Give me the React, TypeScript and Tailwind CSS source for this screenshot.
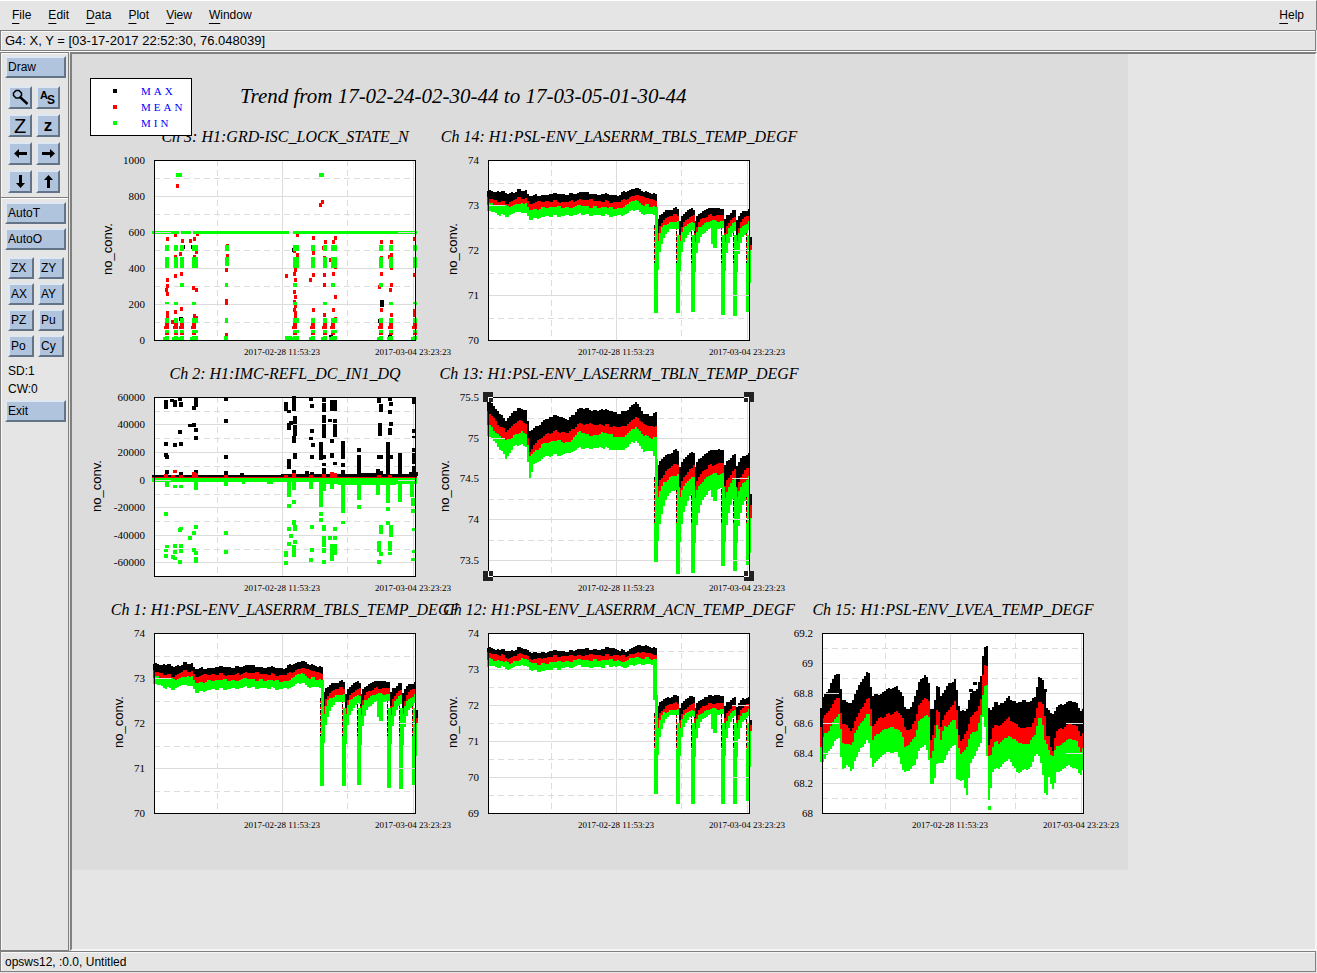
import React from 'react';

type Colour = 'max' | 'mean' | 'min';
type Mark = [x: number, y: number, w: number, h: number];
type Marks = Record<Colour, Mark[]>;
// x, top of max, top of mean, top of min, bottom of min
type Sample = [number, number, number, number, number];

interface PlotProps {
  title: string;
  className?: string;
  height?: number;
  ticks: [label: string, y: number][];
  labelX: number;
  marks: Marks;
  selected?: boolean;
}

const PLOT_WIDTH = 261;
const FILL: Record<Colour, string> = { max: '#000000', mean: '#ff0000', min: '#00ff00' };
const COLOURS: Colour[] = ['max', 'mean', 'min'];
const NOISE = [0, 1, 0, -1, 0, 0, 1, -1, 1, 0, 0, -1, 1];

const noise = (i: number) => NOISE[Math.abs(i) % NOISE.length];

const toPath = (marks: Mark[]) => marks.map(([x, y, w, h]) => `M${x} ${y}h${w}v${h}h${-w}z`).join('');

const band = (samples: Sample[], rough = 1): Marks => {
  const out: Marks = { max: [], mean: [], min: [] };
  const last = samples[samples.length - 1][0];
  let seg = 0;
  for (let x = samples[0][0]; x < last; x += 2) {
    while (samples[seg + 1][0] < x) seg++;
    const a = samples[seg];
    const b = samples[seg + 1];
    const t = (x - a[0]) / (b[0] - a[0]);
    const at = (k: number) => Math.round(a[k] + (b[k] - a[k]) * t);
    const i = Math.floor(x / 4);
    const top = at(1) + noise(i) * rough;
    const mean = at(2) + noise(i + 4);
    const min = at(3) + noise(i + 7);
    const bottom = at(4) + noise(i * 3 + 2) * rough;
    const left = Math.floor(x);
    out.max.push([left, top, 2, Math.max(mean - top, 1)]);
    out.mean.push([left, mean, 2, Math.max(min - mean, 1)]);
    out.min.push([left, min, 2, Math.max(bottom - min, 1)]);
  }
  return out;
};

const join = (...sets: Marks[]): Marks => ({
  max: sets.flatMap((s) => s.max),
  mean: sets.flatMap((s) => s.mean),
  min: sets.flatMap((s) => s.min),
});

const DROPS = [168, 190, 205, 235, 247, 260];

// Sudden drops in temperature, each followed by a slow recovery to the steady level
const recoveries = (
  steady: number[],
  rise: number[],
  tau: number[],
  bottoms: number[],
  dip: number,
  edge: number[],
): Marks => {
  const parts: Marks[] = [];
  DROPS.forEach((x, i) => {
    const end = DROPS[i + 1];
    if (end) {
      const samples: Sample[] = [];
      for (let s = x + 1; s <= end + 1; s++) {
        const y = steady.map((v, k) => v + rise[k] * Math.exp(-(s - x) / tau[k]));
        samples.push([s, y[0], y[1], y[2], y[3]]);
      }
      parts.push(band(samples));
    }
    const dashes: Marks = { max: [], mean: [], min: [] };
    const low = steady[3] + (bottoms[i] - steady[3]) * 0.65;
    for (let y = steady[2] + 4; y < low; y += 6) {
      dashes.max.push([x - 2, y, 1, 3]);
      dashes.mean.push([x - 2, y + 3, 1, 2]);
    }
    const start = i === 0 ? steady[2] - 14 : steady[2] + 14;
    dashes.min.push([x - 1, start, 3, bottoms[i] - start], [x - 2, steady[3] + 34, 4, bottoms[i] - steady[3] - 34]);
    parts.push(dashes);
  });
  parts.push({
    max: [[261, edge[0], 3, edge[1] - edge[0]]],
    mean: [[261, edge[1], 3, edge[2] - edge[1]]],
    min: [[223, steady[2] + 2, 6, dip - steady[2] - 6], [225, steady[2], 4, dip - steady[2]], [261, edge[2], 2, edge[3] - edge[2]]],
  });
  return join(...parts);
};

const TBLS = join(
  band([
    [-1, 30, 38, 44, 50], [15, 32, 42, 45, 56], [18, 34, 43, 47, 56], [30, 30, 38, 43, 52], [37, 30, 38, 44, 54],
    [40, 36, 43, 50, 59], [60, 34, 41, 47, 56], [80, 34, 42, 47, 56], [92, 32, 39, 46, 54], [107, 34, 41, 47, 55],
    [130, 35, 42, 48, 56], [136, 31, 40, 46, 55], [147, 28, 34, 40, 49], [155, 31, 38, 45, 54], [165, 33, 39, 46, 54],
    [169, 34, 40, 47, 66],
  ]),
  recoveries([48, 55, 61, 69], [15, 25, 26, 55], [5, 4, 4, 3.6], [153, 153, 152, 155, 156, 152], 88, [77, 85, 90, 123]),
);

const TBLN = join(
  band([
    [-1, 2, 15, 27, 38], [5, 8, 21, 33, 44], [10, 16, 28, 38, 50], [17, 24, 34, 44, 61], [25, 13, 27, 38, 50],
    [33, 11, 23, 34, 47], [37, 13, 27, 38, 51], [41, 34, 54, 59, 80], [45, 32, 48, 55, 67], [57, 21, 37, 45, 59],
    [67, 19, 34, 44, 58], [80, 22, 36, 45, 57], [90, 11, 26, 35, 51], [107, 13, 28, 39, 51], [112, 12, 27, 35, 50],
    [130, 16, 30, 40, 54], [135, 15, 30, 39, 53], [147, 5, 19, 30, 43], [155, 16, 28, 38, 54], [163, 18, 29, 41, 54],
    [169, 13, 28, 39, 66],
  ]),
  recoveries([51, 65, 76, 92], [20, 28, 28, 65], [9, 8, 7, 5], [165, 177, 176, 169, 174, 168], 104, [97, 108, 121, 156]),
);

const ACN = join(
  band([
    [-1, 14, 20, 26, 33], [13, 17, 22, 28, 34], [20, 18, 25, 30, 36], [34, 14, 20, 25, 32], [43, 20, 26, 30, 37],
    [53, 19, 26, 31, 38], [62, 18, 23, 29, 36], [82, 18, 23, 28, 35], [87, 16, 22, 27, 33], [107, 16, 22, 27, 34],
    [123, 15, 22, 27, 33], [137, 18, 23, 28, 35], [147, 13, 19, 24, 31], [155, 12, 20, 25, 31], [169, 15, 21, 26, 32],
  ]),
  { max: [[167, 50, 2, 3]], mean: [[167, 53, 2, 6], [166, 36, 3, 2]], min: [[165, 31, 4, 36]] },
  recoveries([62, 70, 76, 82], [14, 20, 24, 55], [6, 5, 4, 3.4], [161, 171, 171, 171, 171, 168], 100, [87, 92, 98, 134]),
);

const UNITS = 3;

const LVEA_LOG: Sample[] = [
  [156, 338, 400, 455, 498], [163, 302, 365, 425, 502], [180, 280, 350, 405, 468], [195, 245, 320, 375, 445],
  [213, 238, 306, 358, 425], [218, 315, 385, 440, 525], [235, 318, 392, 447, 514], [250, 330, 420, 450, 534],
  [255, 300, 380, 420, 505], [275, 262, 345, 390, 464], [298, 228, 305, 352, 430], [304, 260, 320, 370, 475],
  [310, 300, 400, 435, 515], [330, 298, 370, 415, 493], [345, 290, 365, 402, 475], [385, 275, 350, 400, 472],
  [400, 295, 365, 415, 525], [408, 340, 400, 455, 532], [425, 340, 405, 448, 526], [440, 300, 370, 425, 505],
  [450, 265, 330, 380, 468], [470, 235, 310, 360, 445], [480, 265, 320, 370, 495], [485, 340, 440, 490, 568],
  [497, 340, 410, 450, 568], [500, 272, 340, 390, 505], [509, 275, 345, 395, 507], [515, 310, 405, 440, 508],
  [525, 290, 360, 400, 498], [540, 265, 345, 388, 468], [560, 255, 320, 370, 450], [564, 290, 350, 400, 553],
  [572, 345, 440, 480, 558], [585, 345, 430, 475, 560], [590, 350, 410, 465, 598], [597, 340, 405, 450, 598],
  [602, 300, 370, 420, 515], [625, 280, 350, 405, 464], [640, 230, 300, 350, 440], [643, 155, 212, 270, 330],
  [654, 155, 212, 270, 480], [656, 330, 430, 470, 600], [664, 350, 465, 500, 624], [668, 350, 410, 465, 545],
  [680, 318, 385, 440, 515], [690, 330, 395, 445, 523], [720, 308, 370, 422, 492], [745, 325, 390, 442, 536],
  [765, 318, 400, 450, 524], [785, 320, 400, 442, 520], [800, 300, 365, 415, 480], [808, 248, 318, 370, 475],
  [820, 250, 320, 372, 515], [826, 275, 350, 430, 598], [834, 340, 420, 450, 598], [840, 345, 420, 470, 545],
  [850, 360, 480, 484, 584], [857, 350, 440, 470, 582], [860, 335, 410, 455, 538], [880, 330, 400, 445, 525],
  [905, 318, 385, 432, 512], [925, 330, 395, 440, 524], [935, 345, 430, 470, 540], [948, 340, 402, 455, 512],
];

const LVEA = join(
  band(LVEA_LOG.map(([x, ...y]) => [(x - 160) / UNITS, ...y.map((v) => (v - 115) / UNITS)] as Sample)),
  { max: [[147, 56, 4, 3], [151, 49, 4, 3], [221, 56, 4, 3]], mean: [], min: [[166, 173, 3, 4]] },
);

// Point markers, given by their centre
const points = (list: [number, number][], top: number, size: number): Mark[] =>
  list.map(([x, y]) => [Math.round((x - 193) / UNITS) - 1, Math.round((y - top) / UNITS) - 2, size, 4]);

// Vertical runs of markers: centre, from, to
const runs = (list: [number, number, number][], top: number): Mark[] =>
  list.map(([x, from, to]) => [
    Math.round((x - 193) / UNITS) - 2,
    Math.round((from - top) / UNITS),
    4,
    Math.round((to - from) / UNITS),
  ]);

const LOCK_COLUMNS: [number, number][] = [
  [11, 4], [20, 4], [26, 4], [38, 6], [139, 6], [157, 4], [169, 4], [177, 6], [225, 4], [235, 4], [259, 4],
];

const LOCK: Marks = {
  max: points(
    [[873, 547], [873, 555], [867, 605], [270, 599], [276, 383], [308, 381], [609, 390], [722, 651], [898, 651]],
    121, 4,
  ),
  mean: [
    ...points(
      [
        [232, 359], [257, 347], [278, 363], [301, 363], [313, 357], [321, 342], [262, 198], [692, 255], [697, 246],
        [270, 402], [257, 412], [312, 412], [320, 398], [275, 462], [257, 469], [231, 480], [228, 510], [231, 500],
        [231, 523], [311, 504], [320, 511], [231, 579], [231, 588], [257, 576], [275, 567], [248, 608], [312, 588],
        [320, 595], [411, 378], [411, 408], [410, 451], [408, 543], [410, 549], [408, 645], [590, 470], [621, 345],
        [612, 395], [622, 407], [612, 463], [617, 452], [617, 480], [614, 516], [617, 531], [614, 548], [612, 570],
        [617, 560], [617, 580], [617, 590], [669, 356], [669, 400], [669, 465], [662, 482], [669, 572], [706, 367],
        [700, 384], [704, 416], [704, 465], [704, 496], [704, 587], [736, 356], [729, 368], [722, 420], [736, 443],
        [729, 463], [735, 531], [729, 572], [735, 597], [873, 366], [873, 416], [873, 463], [867, 502], [873, 572],
        [904, 366], [903, 405], [898, 413], [903, 446], [903, 495], [901, 510], [903, 585], [974, 358], [974, 465],
        [974, 573], [974, 587],
      ],
      121, 3,
    ),
    ...LOCK_COLUMNS.flatMap(([x]): Mark[] => [[x, 163, 4, 6], [x - 1, 166, 3, 3], [x, 173, 4, 2]]),
  ],
  min: [
    [-2, 71, 27, 3], [27, 71, 10, 3], [39, 71, 96, 3], [139, 71, 124, 3],
    [22, 13, 6, 4], [165, 13, 5, 4],
    ...LOCK_COLUMNS.flatMap(([x, w]): Mark[] => [
      [x, 85, w, 6], [x, 97, w, 11], [x, 158, w, 5], [x, 170, w, 3], [x, 176, w, 4], [x - 2, 177, 4, 4],
    ]),
    ...[11, 20, 38, 139, 169, 235, 259].map((x): Mark => [x, 142, 4, 3]),
    ...[26, 139, 177, 225].map((x): Mark => [x, 123, 4, 4]),
    [71, 85, 4, 6], [71, 97, 4, 9], [71, 123, 3, 4], [71, 158, 3, 5], [70, 176, 4, 5], [131, 176, 7, 5],
  ],
};

const REFL: Marks = {
  max: [
    [-2, 78, 265, 3], [127, 77, 137, 2], [255, 75, 9, 4], [206, 76, 20, 3],
    ...runs(
      [
        [228, 122, 148], [248, 117, 127], [256, 122, 144], [270, 112, 124], [273, 128, 144], [318, 114, 140],
        [312, 138, 150], [408, 113, 126], [408, 177, 189], [228, 246, 258], [256, 249, 261], [273, 246, 258],
        [228, 279, 291], [231, 286, 298], [270, 210, 222], [302, 194, 204], [312, 189, 201], [318, 206, 217],
        [318, 228, 240], [408, 285, 297], [231, 332, 345], [273, 337, 348], [320, 330, 345], [410, 333, 345],
        [457, 339, 348], [590, 126, 153], [597, 150, 159], [614, 108, 154], [617, 168, 192], [597, 190, 212],
        [605, 183, 195], [617, 196, 230], [612, 228, 248], [597, 297, 327], [617, 280, 299], [614, 330, 345],
        [663, 114, 124], [667, 132, 144], [667, 207, 219], [663, 231, 240], [669, 250, 262], [667, 285, 297],
        [653, 333, 348], [667, 337, 350], [693, 246, 299], [702, 114, 126], [704, 130, 157], [702, 165, 189],
        [704, 192, 235], [702, 285, 297], [704, 310, 320], [702, 325, 345], [726, 120, 152], [736, 122, 156],
        [722, 177, 187], [736, 177, 190], [735, 192, 230], [726, 237, 248], [726, 280, 296], [735, 308, 318],
        [759, 243, 296], [759, 309, 320], [759, 330, 345], [807, 264, 276], [807, 287, 345], [867, 114, 128],
        [873, 132, 156], [870, 190, 230], [867, 285, 297], [873, 285, 297], [865, 327, 345], [873, 333, 345],
        [894, 246, 276], [894, 276, 345], [900, 112, 125], [903, 128, 140], [900, 151, 162], [903, 186, 198],
        [901, 204, 226], [903, 285, 297], [930, 280, 345], [974, 112, 132], [974, 207, 219], [972, 228, 235],
        [972, 264, 312], [972, 318, 345],
      ],
      112,
    ),
  ],
  mean: [
    [-2, 80, 265, 1],
    ...runs(
      [
        [228, 342, 354], [250, 345, 354], [256, 330, 340], [273, 346, 354], [312, 337, 354], [318, 340, 354],
        [408, 345, 354], [590, 346, 354], [614, 340, 354], [665, 345, 354], [702, 342, 354], [726, 336, 354],
        [736, 340, 354], [868, 346, 354], [900, 346, 354],
      ],
      112,
    ),
  ],
  min: [
    [-2, 81, 265, 4], [113, 84, 6, 3], [166, 84, 97, 3], [184, 85, 58, 3], [88, 84, 3, 3],
    ...runs(
      [
        [231, 366, 382], [256, 375, 385], [273, 375, 385], [318, 366, 389], [408, 366, 379], [228, 456, 468],
        [231, 556, 566], [228, 567, 577], [228, 583, 594], [256, 552, 564], [256, 570, 582], [250, 586, 597],
        [256, 592, 602], [273, 501, 510], [270, 504, 515], [273, 552, 564], [273, 567, 580], [270, 600, 611],
        [318, 495, 507], [312, 513, 524], [302, 528, 539], [312, 564, 576], [318, 574, 585], [318, 592, 611],
        [408, 513, 524], [408, 570, 581], [597, 366, 412], [597, 432, 443], [614, 366, 390], [614, 420, 431],
        [614, 480, 495], [617, 495, 512], [599, 501, 512], [603, 522, 533], [597, 546, 557], [617, 540, 551],
        [614, 555, 592], [590, 574, 592], [590, 603, 614], [665, 366, 388], [667, 495, 507], [667, 564, 575],
        [663, 594, 605], [693, 366, 440], [693, 456, 467], [693, 474, 486], [702, 366, 394], [704, 495, 512],
        [702, 528, 560], [702, 566, 581], [702, 600, 611], [726, 366, 388], [736, 501, 512], [722, 528, 540],
        [736, 530, 542], [726, 552, 602], [736, 552, 585], [759, 366, 459], [759, 483, 492], [807, 366, 421],
        [807, 435, 446], [864, 366, 404], [894, 366, 430], [894, 442, 455], [894, 483, 494], [873, 495, 521],
        [903, 495, 530], [868, 543, 576], [873, 578, 590], [867, 600, 611], [901, 543, 574], [900, 576, 586],
        [930, 366, 425], [968, 366, 411], [971, 416, 440], [971, 447, 459], [974, 504, 513], [974, 570, 578],
        [971, 594, 604],
      ],
      112,
    ),
  ],
};

const evenTicks = (labels: string[], step: number): [string, number][] => labels.map((l, i) => [l, i * step]);

const Plot: React.FC<PlotProps> = ({ title, className = '', height = 180, ticks, labelX, marks, selected }) => (
  <section className={className}>
    <h2 className="mb-[11px] flex h-6 items-center justify-center whitespace-nowrap text-[16px] italic">
      <span>{title}</span>
    </h2>
    <svg width={PLOT_WIDTH + 1} height={height + 1} className="block overflow-visible" role="img" aria-label={title}>
      <g shapeRendering="crispEdges">
        <rect width={PLOT_WIDTH} height={height} fill="#ffffff" />
        {[63, 193].map((x) => (
          <path key={x} d={`M${x} 0V${height}`} stroke="#dcdcdc" strokeDasharray="6 4" transform="translate(.5 0)" />
        ))}
        {[128, 259].map((x) => (
          <path key={x} d={`M${x} 0V${height}`} stroke="#dcdcdc" transform="translate(.5 0)" />
        ))}
        {ticks.map(([label, y], i) => (
          <g key={label} transform="translate(0 .5)">
            <path d={`M0 ${y}H${PLOT_WIDTH}`} stroke="#dcdcdc" />
            {i > 0 && (
              <path
                d={`M0 ${Math.round((y + ticks[i - 1][1]) / 2)}H${PLOT_WIDTH}`}
                stroke="#dcdcdc"
                strokeDasharray="6 4"
              />
            )}
          </g>
        ))}
        {COLOURS.map((c) => (
          <path key={c} d={toPath(marks[c])} fill={FILL[c]} />
        ))}
        {ticks.map(([label, y]) => (
          <path
            key={label}
            d={`M0 ${y}h17M${PLOT_WIDTH - 17} ${y}h17`}
            stroke="#dcdcdc"
            transform="translate(0 .5)"
          />
        ))}
        <rect x={0.5} y={0.5} width={PLOT_WIDTH} height={height} fill="none" stroke="#000000" />
        {selected &&
          [0, PLOT_WIDTH].map((x) =>
            [0, height].map((y) => (
              <g key={`${x}-${y}`}>
                <rect x={x - 5} y={y - 5} width={10} height={10} fill="#222222" />
                <path
                  d={`M${x === 0 ? 0 : x - 1} ${y === 0 ? 5 : y - 5}V${y}H${x === 0 ? 5 : x - 5}`}
                  fill="none"
                  stroke="#ffffff"
                />
              </g>
            )),
          )}
      </g>
      <g fontSize={11} textAnchor="end">
        {ticks.map(([label, y]) => (
          <text key={label} x={-9} y={y + 4}>
            {label}
          </text>
        ))}
      </g>
      <g fontSize={9} textAnchor="middle">
        <text x={128} y={height + 15}>2017-02-28 11:53:23</text>
        <text x={259} y={height + 15}>2017-03-04 23:23:23</text>
      </g>
      <text
        transform={`translate(${labelX} 89) rotate(-90)`}
        textAnchor="middle"
        fontSize={13}
        className="font-['Liberation_Sans',sans-serif]"
      >
        no_conv.
      </text>
    </svg>
  </section>
);

const MenuItem: React.FC<{ name: string }> = ({ name }) => (
  <button type="button">
    <span className="underline underline-offset-4">{name[0]}</span>
    {name.slice(1)}
  </button>
);

const ToolButton: React.FC<{ label?: string; className?: string; children: React.ReactNode }> = ({
  label,
  className = '',
  children,
}) => (
  <button
    type="button"
    aria-label={label}
    className={`flex items-center border-2 border-t-[#dfe7f1] border-l-[#dfe7f1] border-r-[#647488] border-b-[#647488] bg-[#b0c4de] ${className}`}
  >
    {children}
  </button>
);

const Arrow: React.FC<{ turn: number }> = ({ turn }) => (
  <svg width="15" height="15" viewBox="0 0 15 15">
    <path d="M1 7.500 6 3v3h8v3H6v3z" transform={`rotate(${turn} 7.5 7.5)`} />
  </svg>
);

const ICON_TOOLS = [
  {
    label: 'Find',
    icon: (
      <svg width="17" height="17" viewBox="0 0 17 17" fill="none" stroke="#000000">
        <path d="M4 1.500h3L9.500 4v2.500L7 9H4L1.500 6.500V4z" strokeWidth="1.500" />
        <path d="M8 8l7.500 7" strokeWidth="2.400" />
      </svg>
    ),
  },
  {
    label: 'Autoscale',
    icon: (
      <svg
        width="18"
        height="18"
        viewBox="0 0 18 18"
        className="overflow-visible font-['Liberation_Sans',sans-serif] font-bold"
      >
        <text x="1" y="10" fontSize="11">A</text>
        <text x="8" y="15" fontSize="12">S</text>
      </svg>
    ),
  },
  { label: 'Zoom in', icon: <span className="text-[20px] leading-5">Z</span> },
  { label: 'Zoom out', icon: <span className="text-[17px] leading-4 font-bold">z</span> },
  { label: 'Left', icon: <Arrow turn={0} /> },
  { label: 'Right', icon: <Arrow turn={180} /> },
  { label: 'Down', icon: <Arrow turn={270} /> },
  { label: 'Up', icon: <Arrow turn={90} /> },
];

const App: React.FC = () => {
  return (
    <div className="flex min-h-screen flex-col bg-[#e5e5e5] font-['Liberation_Sans',sans-serif] text-[12px] text-black">
      {/* Menu bar */}
      <nav className="flex h-[30px] items-center gap-[17px] border-t border-t-white border-r border-r-[#808080] px-3 pb-0.5">
        {['File', 'Edit', 'Data', 'Plot', 'View', 'Window'].map((name) => (
          <MenuItem key={name} name={name} />
        ))}
        <span className="flex-1" />
        <MenuItem name="Help" />
      </nav>

      {/* Cursor position */}
      <div className="mr-px flex h-[21px] items-center border border-[#808080] pl-1 text-[13px] shadow-[inset_1px_1px_0_#f8f8f8]">
        G4: X, Y = [03-17-2017 22:52:30, 76.048039]
      </div>

      <div className="flex flex-1 border-t border-t-white">
        {/* Tool panel */}
        <aside className="flex w-[69px] shrink-0 flex-col border border-[#808080] pt-[3px] pr-[2px] pl-1 shadow-[inset_1px_1px_0_#f8f8f8]">
          <ToolButton className="h-[22px] pl-px">Draw</ToolButton>
          <div className="mt-2 grid grid-cols-[24px_24px] gap-x-1 gap-y-[5px] pl-[3px]">
            {ICON_TOOLS.map(({ label, icon }) => (
              <ToolButton key={label} label={label} className="h-[23px] justify-center">
                {icon}
              </ToolButton>
            ))}
          </div>
          <hr className="-mr-[2px] mb-[3px] -ml-1 mt-1 border-t border-b border-t-[#808080] border-b-white" />
          <div className="flex flex-col gap-1">
            <ToolButton className="h-[22px] pl-px">AutoT</ToolButton>
            <ToolButton className="h-[22px] pl-px">AutoO</ToolButton>
          </div>
          <div className="mt-[7px] grid grid-cols-[26px_26px] gap-1 pl-[3px]">
            {['ZX', 'ZY', 'AX', 'AY', 'PZ', 'Pu', 'Po', 'Cy'].map((name) => (
              <ToolButton key={name} className="h-[22px] pl-px">
                {name}
              </ToolButton>
            ))}
          </div>
          <div className="mt-[5px] mb-[2px] pl-[3px] leading-[18px]">
            <p>SD:1</p>
            <p>CW:0</p>
          </div>
          <ToolButton className="h-[22px] pl-px">Exit</ToolButton>
        </aside>

        {/* Drawing area */}
        <main className="ml-px flex-1 border-2 border-t-[#808080] border-r-[#f5f5f5] border-b-[#f5f5f5] border-l-[#808080]">
          <div className="relative w-fit bg-[#dcdcdc] pt-7 pr-[44px] pb-14 pl-[82px] font-['Liberation_Serif',serif]">
            <h1 className="mb-[15px] pl-[86px] text-[21px] leading-7 italic">
              Trend from 17-02-24-02-30-44 to 17-03-05-01-30-44
            </h1>

            <div className="grid grid-cols-[repeat(3,262px)] gap-x-[72px] gap-y-[21px]">
              <Plot
                title="Ch 3: H1:GRD-ISC_LOCK_STATE_N"
                ticks={evenTicks(['1000', '800', '600', '400', '200', '0'], 36)}
                labelX={-42}
                marks={LOCK}
              />
              <Plot
                title="Ch 14: H1:PSL-ENV_LASERRM_TBLS_TEMP_DEGF"
                ticks={evenTicks(['74', '73', '72', '71', '70'], 45)}
                labelX={-31}
                marks={TBLS}
              />
              <Plot
                title="Ch 2: H1:IMC-REFL_DC_IN1_DQ"
                className="col-start-1"
                height={179}
                ticks={[['60000', 0], ['40000', 27], ['20000', 55], ['0', 83], ['-20000', 110], ['-40000', 138], ['-60000', 165]]}
                labelX={-53}
                marks={REFL}
              />
              <Plot
                title="Ch 13: H1:PSL-ENV_LASERRM_TBLN_TEMP_DEGF"
                height={179}
                ticks={[['75.5', 0], ['75', 41], ['74.5', 81], ['74', 122], ['73.5', 163]]}
                labelX={-39}
                marks={TBLN}
                selected
              />
              <Plot
                title="Ch 1: H1:PSL-ENV_LASERRM_TBLS_TEMP_DEGF"
                className="col-start-1"
                ticks={evenTicks(['74', '73', '72', '71', '70'], 45)}
                labelX={-31}
                marks={TBLS}
              />
              <Plot
                title="Ch 12: H1:PSL-ENV_LASERRM_ACN_TEMP_DEGF"
                ticks={evenTicks(['74', '73', '72', '71', '70', '69'], 36)}
                labelX={-31}
                marks={ACN}
              />
              <Plot
                title="Ch 15: H1:PSL-ENV_LVEA_TEMP_DEGF"
                ticks={evenTicks(['69.2', '69', '68.8', '68.6', '68.4', '68.2', '68'], 30)}
                labelX={-39}
                marks={LVEA}
              />
            </div>

            {/* Legend floats over the first plot */}
            <ul className="absolute top-6 left-[18px] w-[102px] border border-black bg-white py-1 pl-[22px] text-[11px] leading-4 tracking-[3px] text-[#0000ff]">
              <li className="flex items-center gap-6"><i className="h-1 w-1 bg-black" />MAX</li>
              <li className="flex items-center gap-6"><i className="h-1 w-1 bg-[#ff0000]" />MEAN</li>
              <li className="flex items-center gap-6"><i className="h-1 w-1 bg-[#00ff00]" />MIN</li>
            </ul>
          </div>
        </main>
      </div>

      {/* Status bar */}
      <footer className="mr-px mb-px flex h-[21px] items-center border border-[#808080] pl-1 shadow-[inset_1px_1px_0_#f8f8f8]">
        opsws12, :0.0, Untitled
      </footer>
    </div>
  );
};

export default App;
